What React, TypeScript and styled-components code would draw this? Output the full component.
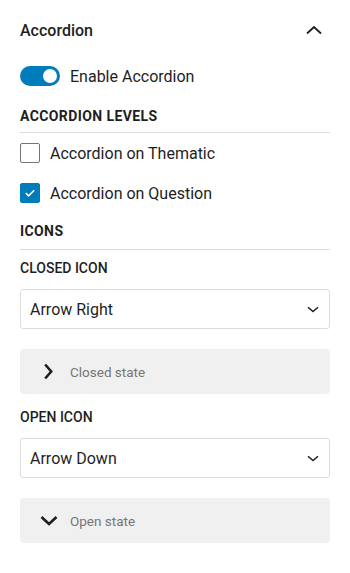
import React, { useState } from 'react';
import styled, { createGlobalStyle } from 'styled-components';

const GlobalStyle = createGlobalStyle`
  html, body {
    margin: 0;
    padding: 0;
    background: #fff;
    font-family: Roboto, "Liberation Sans", sans-serif;
    color: #1e1e1e;
  }
`;

const Panel = styled.div`
  width: 350px;
  box-sizing: border-box;
  padding: 0 20px;
`;

const PanelHeader = styled.div`
  display: flex;
  align-items: center;
  justify-content: space-between;
  height: 60px;
  font-size: 16px;
  font-weight: 500;
`;

const IconButton = styled.span`
  display: flex;
  width: 24px;
  height: 24px;
  align-items: center;
  justify-content: center;
  margin-right: 4px;
`;

const Row = styled.label<{ $h?: number }>`
  display: flex;
  align-items: center;
  gap: 10px;
  height: ${(p) => p.$h ?? 40}px;
  font-size: 16px;
  color: #1e1e1e;
`;

const Toggle = styled.span<{ $on: boolean }>`
  position: relative;
  width: 40px;
  height: 20px;
  border-radius: 10px;
  background: ${(p) => (p.$on ? '#007cba' : '#949494')};
  flex-shrink: 0;

  &::after {
    content: '';
    position: absolute;
    top: 3px;
    left: ${(p) => (p.$on ? '23px' : '3px')};
    width: 14px;
    height: 14px;
    border-radius: 50%;
    background: #fff;
  }
`;

const Box = styled.span<{ $on: boolean }>`
  display: flex;
  align-items: center;
  justify-content: center;
  width: 20px;
  height: 20px;
  box-sizing: border-box;
  border-radius: 2px;
  border: 1px solid ${(p) => (p.$on ? '#007cba' : '#757575')};
  background: ${(p) => (p.$on ? '#007cba' : '#fff')};
  flex-shrink: 0;
`;

const SectionTitle = styled.div<{ $top: number; $bottom: number }>`
  font-size: 14px;
  line-height: 16px;
  font-weight: 700;
  letter-spacing: 0.4px;
  text-transform: uppercase;
  padding: ${(p) => p.$top}px 0 ${(p) => p.$bottom}px;
  border-bottom: 1px solid #ddd;
`;

const FieldLabel = styled.div`
  font-size: 14px;
  line-height: 16px;
  font-weight: 500;
  text-transform: uppercase;
  padding: 10px 0 13px;
`;

const Select = styled.div`
  display: flex;
  align-items: center;
  justify-content: space-between;
  height: 40px;
  box-sizing: border-box;
  border: 1px solid #ddd;
  border-radius: 3px;
  padding: 0 10px 0 9px;
  font-size: 16px;
`;

const Preview = styled.div`
  display: flex;
  align-items: center;
  height: 45px;
  margin: 20px 0 5px;
  background: #f0f0f0;
  border-radius: 4px;
  padding-left: 20px;
  gap: 12px;
  font-size: 13.5px;
  color: #757575;
`;

const PreviewIcon = styled.span`
  display: flex;
  width: 18px;
  justify-content: center;
`;

const ChevronUp = () => (
  <svg width="16" height="10" viewBox="0 0 16 10">
    <path d="M1 8.5 L8 2 L15 8.5" fill="none" stroke="#1e1e1e" strokeWidth="1.8" />
  </svg>
);

const SelectChevron = () => (
  <svg width="12" height="7" viewBox="0 0 12 7">
    <path d="M1 1.2 L6 5.5 L11 1.2" fill="none" stroke="#1e1e1e" strokeWidth="1.5" />
  </svg>
);

const BoldRight = () => (
  <svg width="10" height="17" viewBox="0 0 10 17">
    <path d="M1.2 1.5 L7.2 8.5 L1.2 15.5" fill="none" stroke="#1e1e1e" strokeWidth="2.6" />
  </svg>
);

const BoldDown = () => (
  <svg width="18" height="11" viewBox="0 0 18 11">
    <path d="M1.5 2 L9 9 L16.5 2" fill="none" stroke="#1e1e1e" strokeWidth="2.6" />
  </svg>
);

const Check = () => (
  <svg width="12" height="10" viewBox="0 0 12 10">
    <path d="M1.8 5 L4.6 7.8 L10.2 2.2" fill="none" stroke="#fff" strokeWidth="1.6" />
  </svg>
);

export default function App() {
  const [enabled, setEnabled] = useState(true);
  const [thematic, setThematic] = useState(false);
  const [question, setQuestion] = useState(true);

  return (
    <Panel>
      <GlobalStyle />
      <PanelHeader>
        Accordion
        <IconButton>
          <ChevronUp />
        </IconButton>
      </PanelHeader>
      <Row $h={32} onClick={() => setEnabled(!enabled)}>
        <Toggle $on={enabled} />
        Enable Accordion
      </Row>
      <SectionTitle $top={16} $bottom={8}>Accordion levels</SectionTitle>
      <Row onClick={() => setThematic(!thematic)}>
        <Box $on={thematic}>{thematic && <Check />}</Box>
        Accordion on Thematic
      </Row>
      <Row onClick={() => setQuestion(!question)}>
        <Box $on={question}>{question && <Check />}</Box>
        Accordion on Question
      </Row>
      <SectionTitle $top={10} $bottom={10}>Icons</SectionTitle>
      <FieldLabel>Closed icon</FieldLabel>
      <Select>
        Arrow Right
        <SelectChevron />
      </Select>
      <Preview>
        <PreviewIcon>
          <BoldRight />
        </PreviewIcon>
        Closed state
      </Preview>
      <FieldLabel>Open icon</FieldLabel>
      <Select>
        Arrow Down
        <SelectChevron />
      </Select>
      <Preview>
        <PreviewIcon>
          <BoldDown />
        </PreviewIcon>
        Open state
      </Preview>
    </Panel>
  );
}
